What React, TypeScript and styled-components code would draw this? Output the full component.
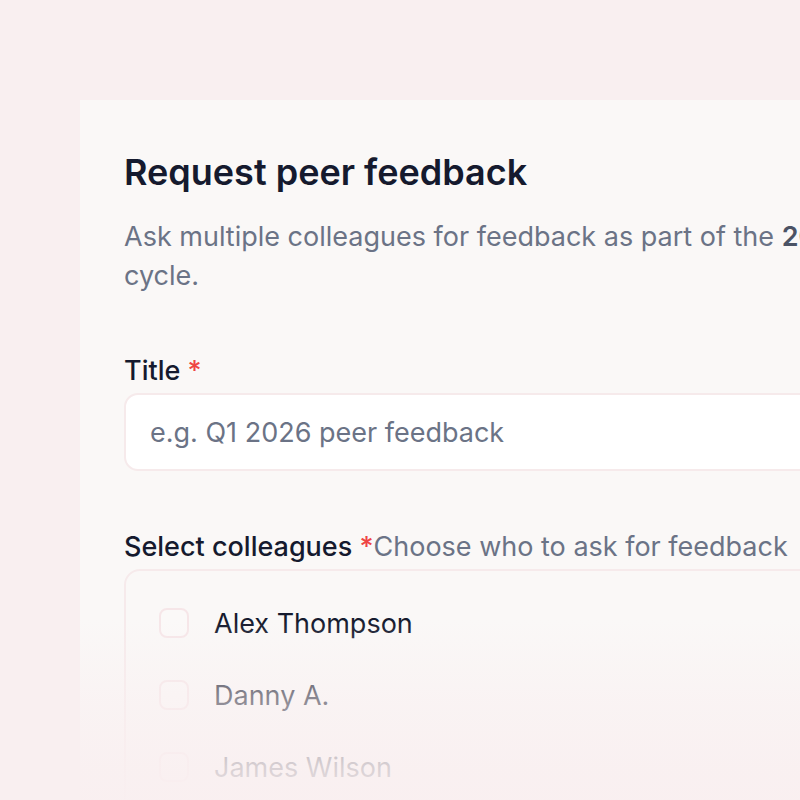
import React from "react";
import styled, { createGlobalStyle } from "styled-components";

const GlobalStyle = createGlobalStyle`
  html, body, #root {
    margin: 0;
    height: 100%;
  }
  body {
    background: #f9eff0;
    font-family: Inter, "Noto Sans", sans-serif;
    overflow: hidden;
  }
`;

const Page = styled.div`
  position: relative;
  height: 100%;
  padding: 100px 0 0 80px;
  box-sizing: border-box;
  overflow: hidden;
`;

// card runs off the right and bottom edge of the shot
const Card = styled.div`
  width: 1108px;
  min-height: 800px;
  background: #faf8f7;
  padding: 50px 44px;
  box-sizing: border-box;
`;

const Heading = styled.h1`
  margin: 0;
  font-size: 36px;
  line-height: 45px;
  font-weight: 600;
  color: #151a2e;
`;

const Subtitle = styled.p`
  margin: 22px 0 0;
  font-size: 27px;
  line-height: 39px;
  color: #6b7386;

  strong {
    font-weight: 600;
    color: #4b5365;
  }
`;

const Field = styled.div<{ $gap: number }>`
  margin-top: ${(p) => p.$gap}px;
`;

const Label = styled.div`
  font-size: 27px;
  line-height: 36px;
  font-weight: 500;
  color: #151a2e;
  margin-bottom: 4px;
  white-space: nowrap;
`;

const Required = styled.span`
  color: #ef4444;
`;

const Hint = styled.span`
  font-weight: 400;
  color: #6b7386;
`;

const Input = styled.input`
  display: block;
  width: 100%;
  height: 78px;
  box-sizing: border-box;
  border: 2px solid #f6eaeb;
  border-radius: 14px;
  background: #ffffff;
  padding: 0 24px;
  font-family: inherit;
  font-size: 27px;
  color: #151a2e;
  outline: none;

  &::placeholder {
    color: #6b7386;
  }
`;

const List = styled.div`
  border: 2px solid #f6eaeb;
  border-radius: 16px;
  padding: 16px 33px;
`;

const Row = styled.label`
  display: flex;
  align-items: center;
  gap: 25px;
  height: 72px;
  font-size: 27px;
  color: #151a2e;
`;

const Box = styled.span`
  width: 30px;
  height: 30px;
  box-sizing: border-box;
  border: 2px solid #f6e6e8;
  border-radius: 8px;
  background: #fbf9f8;
  flex-shrink: 0;
`;

const Fade = styled.div`
  position: absolute;
  left: 0;
  right: 0;
  top: 620px;
  bottom: 0;
  pointer-events: none;
  background: linear-gradient(
    to bottom,
    rgba(249, 239, 240, 0) 0%,
    rgba(249, 239, 240, 0.5) 42%,
    rgba(249, 239, 240, 0.85) 81%,
    rgba(249, 239, 240, 0.95) 100%
  );
`;

const colleagues = ["Alex Thompson", "Danny A.", "James Wilson", "Maria Garcia"];

export default function App() {
  return (
    <>
      <GlobalStyle />
      <Page>
        <Card>
          <Heading>Request peer feedback</Heading>
          <Subtitle>
            Ask multiple colleagues for feedback as part of the{" "}
            <strong>2026 Performance Review</strong> cycle.
          </Subtitle>

          <Field $gap={58}>
            <Label>
              Title <Required>*</Required>
            </Label>
            <Input placeholder="e.g. Q1 2026 peer feedback" />
          </Field>

          <Field $gap={58}>
            <Label>
              Select colleagues <Required>*</Required>
              <Hint>Choose who to ask for feedback</Hint>
            </Label>
            <List>
              {colleagues.map((name) => (
                <Row key={name}>
                  <Box />
                  {name}
                </Row>
              ))}
            </List>
          </Field>
        </Card>
        <Fade />
      </Page>
    </>
  );
}
